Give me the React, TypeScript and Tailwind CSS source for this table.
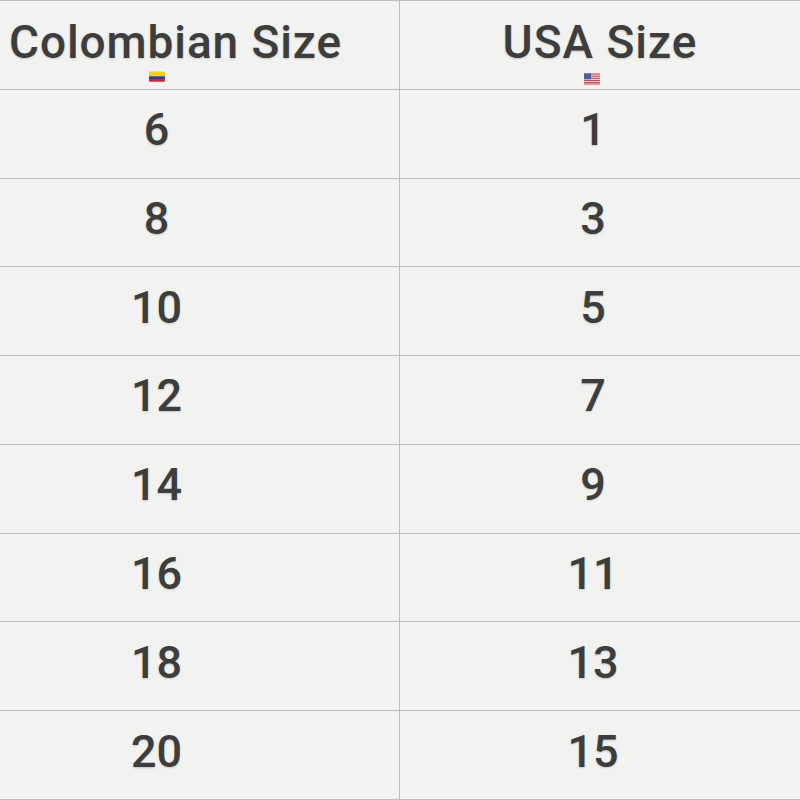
import React from 'react';

const rows: [string, string][] = [
  ['6', '1'],
  ['8', '3'],
  ['10', '5'],
  ['12', '7'],
  ['14', '9'],
  ['16', '11'],
  ['18', '13'],
  ['20', '15'],
];

const ColombiaFlag: React.FC = () => (
  <svg width="16" height="11" viewBox="0 0 16 11" className="block">
    <rect x="0" y="0.5" width="16" height="5" rx="1" fill="#f3cd1f" />
    <rect x="0" y="5.3" width="16" height="2.7" fill="#2d3f92" />
    <rect x="0" y="8" width="16" height="2.7" rx="0.8" fill="#c7283c" />
  </svg>
);

const UsaFlag: React.FC = () => (
  <svg width="16" height="12" viewBox="0 0 16 12" className="block">
    <rect x="0" y="0.5" width="16" height="11" rx="1" fill="#f4f4f4" />
    <rect x="0" y="0.5" width="16" height="1.2" fill="#d9434f" />
    <rect x="0" y="2.6" width="16" height="1.2" fill="#d9434f" />
    <rect x="0" y="4.7" width="16" height="1.2" fill="#d9434f" />
    <rect x="0" y="6.8" width="16" height="1.2" fill="#d9434f" />
    <rect x="0" y="8.9" width="16" height="1.2" fill="#d9434f" />
    <rect x="0" y="10.5" width="16" height="1" fill="#d9434f" />
    <rect x="0" y="0.5" width="7" height="5.8" fill="#4a5f9c" />
  </svg>
);

const textStyle =
  "text-[#3d3d3d] font-['Roboto','Liberation_Sans',sans-serif] font-medium [text-shadow:0_1px_2px_rgba(0,0,0,0.18)]";

const App: React.FC = () => {
  return (
    <div className="w-[800px] h-[800px] bg-[#f2f2f1] overflow-hidden">
      <div className="grid grid-cols-[400px_400px] grid-rows-9 h-[800px] border-t border-[#bdbdbd]">
        {/* Header */}
        <div className="flex flex-col justify-start pt-[13px] border-b border-r border-[#bdbdbd]">
          <div className={`${textStyle} text-[46px] leading-[56px] tracking-[0.9px] pl-[9px]`}>Colombian Size</div>
          <div className="flex justify-center pr-[86px] mt-[1px]">
            <ColombiaFlag />
          </div>
        </div>
        <div className="flex flex-col justify-start pt-[13px] border-b border-[#bdbdbd]">
          <div className={`${textStyle} text-[46px] leading-[56px] tracking-[1px] text-center`}>USA Size</div>
          <div className="flex justify-center pr-[16px] mt-[3px]">
            <UsaFlag />
          </div>
        </div>

        {/* Rows */}
        {rows.map(([co, us]) => (
          <React.Fragment key={co}>
            <div className="flex items-center justify-center pr-[86px] pb-[8px] border-b border-r border-[#bdbdbd]">
              <span className={`${textStyle} text-[45px] leading-none`}>{co}</span>
            </div>
            <div className="flex items-center justify-center pr-[14px] pb-[8px] border-b border-[#bdbdbd]">
              <span className={`${textStyle} text-[45px] leading-none`}>{us}</span>
            </div>
          </React.Fragment>
        ))}
      </div>
    </div>
  );
};

export default App;
